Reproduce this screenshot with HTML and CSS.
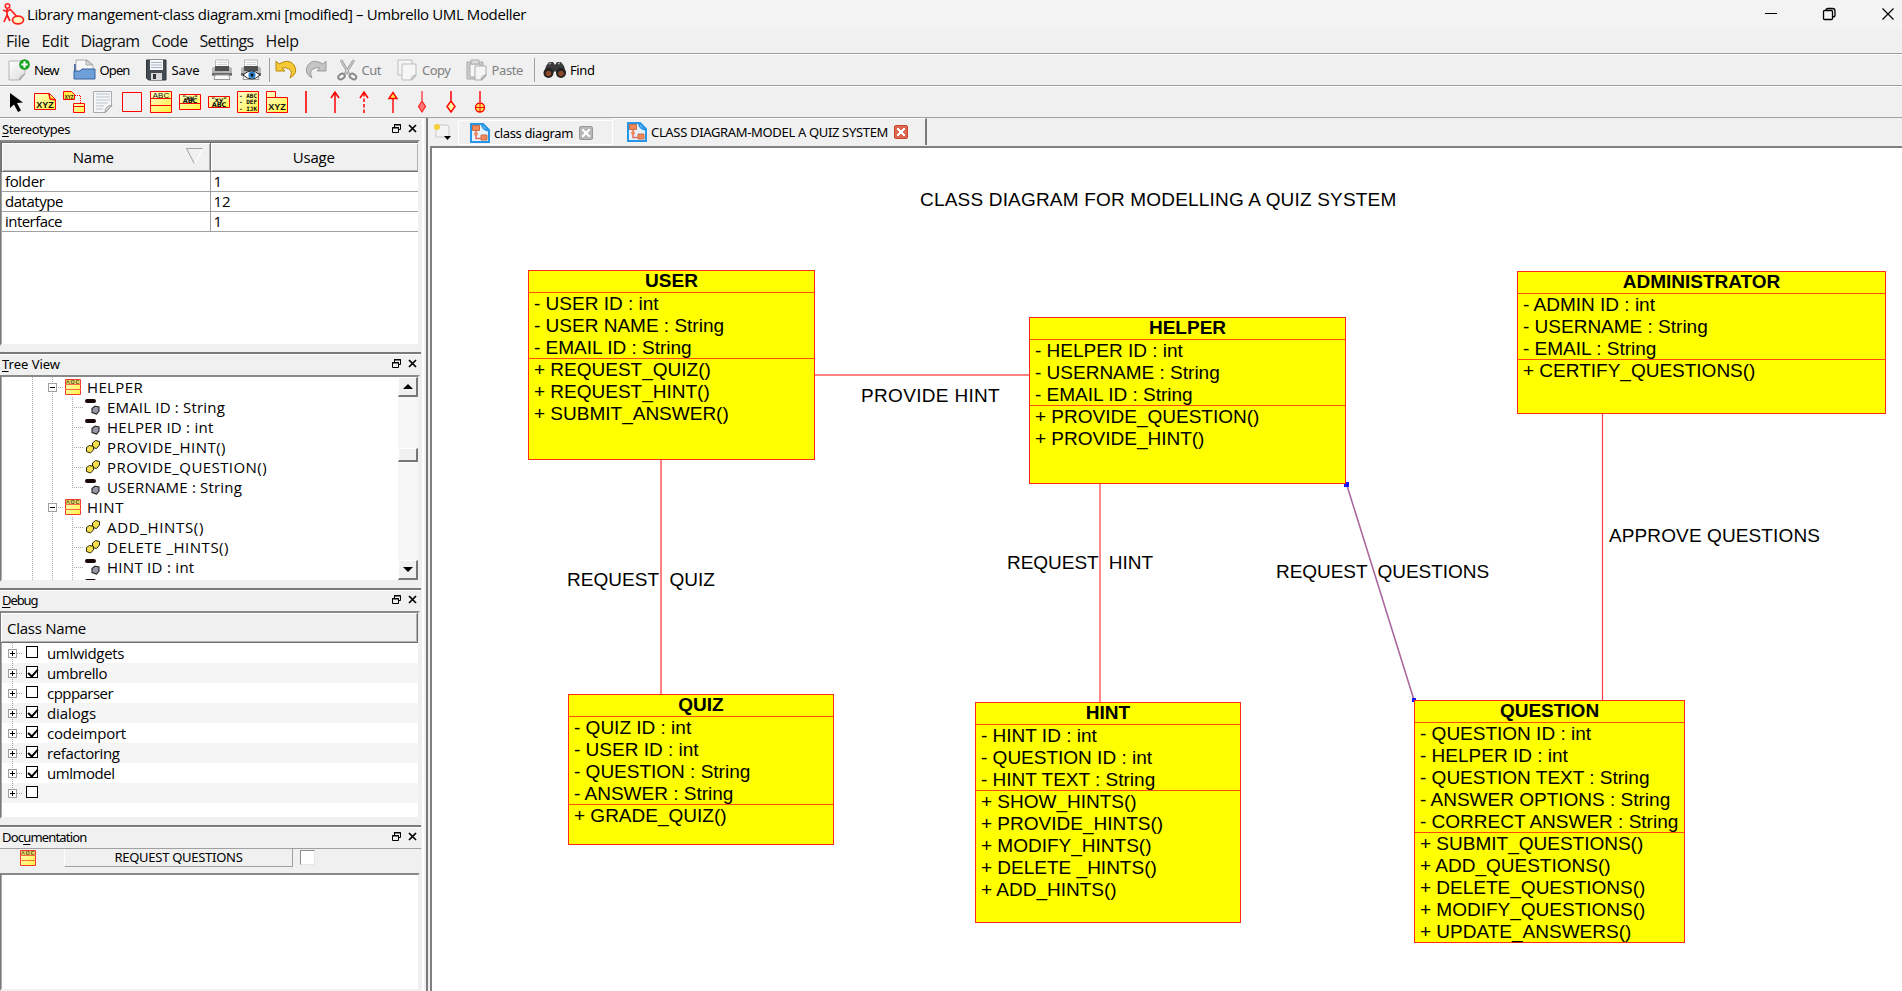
FILE: index.html
```html
<!DOCTYPE html>
<html lang="en">
<head>
<meta charset="utf-8">
<title>Umbrello UML Modeller</title>
<link rel="stylesheet" href="styles.css">
</head>
<body>
<svg width="0" height="0" class="defs">
  <defs>
    <linearGradient id="cream" x1="0" y1="0" x2="1" y2="1"><stop offset="0" stop-color="#ffffd0"/><stop offset="1" stop-color="#fff23c"/></linearGradient>
    <linearGradient id="paper" x1="0" y1="0" x2="1" y2="1"><stop offset="0" stop-color="#fff"/><stop offset="1" stop-color="#dcdcdc"/></linearGradient>
    <symbol id="float" viewBox="0 0 9 9"><path d="M2.5 0.5h6v5h-2M2.5 0v3M2 1h7M.5 3.5h6v5h-6zM0 4h7" fill="none" stroke="#000"/></symbol>
    <symbol id="close" viewBox="0 0 9 9"><path d="M1 1l7 7M8 1L1 8" stroke="#000" stroke-width="1.7"/></symbol>
    <symbol id="class" viewBox="0 0 16 16"><path d="M.5 .5h15v15H.5z" fill="url(#cream)" stroke="#f43a2a"/><path d="M1 1h14v4H1z" fill="#dccf62"/><path d="M1.500 4.500l1.500-3 1.500 3M6.500 1.500v3h2.500v-3zM14 1.500h-2.500v3H14" stroke="#6a6028" stroke-width=".8" fill="none"/><path d="M0 5.500h16M0 10.500h16" stroke="#ff6a40"/></symbol>
    <symbol id="attr" viewBox="0 0 16 16"><path d="M2 2h7" stroke="#1a0508" stroke-width="4" stroke-linecap="round"/><path d="M7 9.500l3-2.500 4 1v4l-2.500 3-4.500-1.500z" fill="#9a96a8" stroke="#222" stroke-width="1.100"/></symbol>
    <symbol id="oper" viewBox="0 0 16 16"><path d="M7.500 4l3-2.500 4 1v3.500l-3 3.500-4-1z" fill="#f3e04c" stroke="#2b2400"/><path d="M1.500 8.500l3-2 4 .8v3.500L5.500 14l-4-1.500z" fill="#f3e04c" stroke="#2b2400"/></symbol>
    <symbol id="diagram" viewBox="0 0 20 20"><path d="M1 1h12l6 6v12H1z" fill="#e4f3ff" stroke="#2796e6" stroke-width="2"/><path d="M12 1q-1 5 7 7z" fill="#fff" stroke="#2796e6" stroke-width="1.500"/><path d="M2.500 2.500h7v5h-7zM11 12h6v5h-6z" fill="#f08a5c" stroke="#c96a40"/><path d="M6 12v3.500h5M6 8v2" fill="none" stroke="#e66a58" stroke-width="1.500"/><circle cx="6" cy="11" r="2" fill="#f08a5c"/></symbol>
    <symbol id="printer" viewBox="0 0 22 22"><path d="M4.500 1h13v9h-13z" fill="#fafafa" stroke="#bbb"/><path d="M6 3.500h10M6 5.500h10" stroke="#d4d4d4"/><path d="M1 10q0-2 2-2h16q2 0 2 2v7H1z" fill="#b4b4b4"/><path d="M4 7h14v5H4z" fill="#505050"/><path d="M1 14h20v2.500H1z" fill="#6a6a6a"/><path d="M4 16h14l1 4.500H3z" fill="#fafafa" stroke="#999"/></symbol>
  </defs>
</svg>
<div class="window">
  <header class="titlebar">
    <svg class="app" width="23" height="22" viewBox="0 0 23 22"><circle cx="5.500" cy="3" r="2.200" fill="#fff" stroke="#f22" stroke-width="1.600"/><path d="M1 7l4 1.500 4-2.500M5 5.500v7M5 12l-3 7M5 12l3 6M9 7l6 7" stroke="#f22" stroke-width="1.800" fill="none"/><ellipse cx="16" cy="17" rx="5.500" ry="3.800" fill="#fff9c0" stroke="#f22" stroke-width="1.700"/></svg>
    <span class="caption" data-w="499">Library mangement-class diagram.xmi [modified] – Umbrello UML Modeller</span>
    <svg class="winbtns" width="130" height="14" viewBox="0 0 130 14" fill="none" stroke="#000"><path d="M0 6.500h12"/><path d="M58.500 4.500q0-1 1-1h7q1 0 1 1v7q0 1-1 1h-7q-1 0-1-1zM61 3.500q0-2 2-2h4.500q2.500 0 2.500 2.500v4q0 2-2 2" stroke-width="1.300"/><path d="M117.500 1.500l11 11M128.500 1.500l-11 11" stroke-width="1.200"/></svg>
  </header>
  <nav class="menubar">
    <span data-w="23.500">File</span><span data-w="27">Edit</span><span data-w="59">Diagram</span><span data-w="36">Code</span><span data-w="54">Settings</span><span data-w="33">Help</span>
  </nav>
  <div class="toolbar main">
    <svg class="t-new" width="22" height="22" viewBox="0 0 22 22"><path d="M1 2h13l3 3v10l-5 6H1z" fill="url(#paper)" stroke="#b5b5b5"/><path d="M11 21q1-5 6-6z" fill="#eee" stroke="#aaa"/><circle cx="16.500" cy="5.500" r="5.300" fill="#14a01c"/><path d="M16.500 2.300v6.400M13.300 5.500h6.400" stroke="#fff" stroke-width="2.200"/></svg>
    <span data-w="24.500" class="l-new">New</span>
    <svg class="t-open" width="23" height="22" viewBox="0 0 23 22"><path d="M1 5h6v14H1z" fill="#3f6ba8"/><path d="M3 1h11l6 5v9H3z" fill="#f8f8f8" stroke="#aaa"/><path d="M13 1v5h6z" fill="#ddd" stroke="#aaa"/><path d="M1 12h6l2-2h13v10H1z" fill="#6f9fd8" stroke="#35609c"/></svg>
    <span data-w="30" class="l-open">Open</span>
    <svg class="t-save" width="21" height="22" viewBox="0 0 21 22"><path d="M.5 1h19.500v20H2.500l-2-2z" fill="#444b53" stroke="#2d3238"/><path d="M4 1h13v10H4z" fill="#f5f7f9"/><path d="M5 3.500h11M5 6h11M5 8.500h11" stroke="#a8b6c4"/><path d="M5 14h11v7H5z" fill="#d5d8db"/><path d="M7 15h3v5H7z" fill="#333"/></svg>
    <span data-w="28" class="l-save">Save</span>
    <svg class="t-print" width="22" height="22"><use href="#printer"/></svg>
    <svg class="t-preview" width="22" height="22"><use href="#printer"/><path d="M3 16q8-8 17 0-8 8-17 0z" fill="#fff" stroke="#222"/><circle cx="12" cy="16" r="3.600" fill="#2d82d0"/><circle cx="12" cy="16" r="1.500" fill="#111"/></svg>
    <i class="sep"></i>
    <svg class="t-undo" width="23" height="20" viewBox="0 0 23 20"><path d="M1 1l3 3q10-6 15 1 5 8-4 13 3-7-1-9-3-2-7-1l3 3H1z" fill="#f5c838" stroke="#b98a10"/></svg>
    <svg class="t-redo" width="23" height="20" viewBox="0 0 23 20"><path d="M22 1l-3 3Q9-2 4 5q-5 8 4 13-3-7 1-9 3-2 7-1l-3 3h9z" fill="#c4c4c4" stroke="#9c9c9c"/></svg>
    <svg class="t-cut" width="21" height="22" viewBox="0 0 21 22"><path d="M4 1l8 14M17 1L8 15" stroke="#999" stroke-width="2.600"/><path d="M4 1l8 14M17 1L8 15" stroke="#ddd"/><ellipse cx="4.500" cy="17.500" rx="3.500" ry="2.500" transform="rotate(-35 4.500 17.500)" fill="none" stroke="#888" stroke-width="2"/><ellipse cx="16" cy="17.500" rx="3.500" ry="2.500" transform="rotate(35 16 17.500)" fill="none" stroke="#888" stroke-width="2"/></svg>
    <span class="off l-cut" data-w="19.500">Cut</span>
    <svg class="t-copy" width="21" height="22" viewBox="0 0 21 22" fill="#f6f6f6" stroke="#bdbdbd"><path d="M1 1h14v15H1z"/><path d="M5 5h14v12l-4 4H5z"/><path d="M14 21q0-5 5-5z" fill="#ddd"/></svg>
    <span class="off l-copy" data-w="28.500">Copy</span>
    <svg class="t-paste" width="22" height="22" viewBox="0 0 22 22" fill="#f6f6f6" stroke="#aaa"><path d="M1 3h16v17H1z" fill="#ccc"/><path d="M4 5h10v13H4z"/><path d="M5 1h8v4H5z" fill="#ddd"/><path d="M9 7h11v10l-4 4H9z"/><path d="M15 21q0-5 5-5z" fill="#ddd"/></svg>
    <span class="off l-paste" data-w="31.500">Paste</span>
    <i class="sep s2"></i>
    <svg class="t-find" width="24" height="18" viewBox="0 0 24 18"><path d="M3 5l3-4h4l2 3 2-3h4l3 4 2 7h-9l-2-2-2 2H1z" fill="#3a3a3a"/><circle cx="5.500" cy="12" r="5" fill="#222"/><circle cx="18" cy="12" r="5" fill="#222"/><circle cx="5.500" cy="12.500" r="2.800" fill="#8c4a2a"/><circle cx="18" cy="12.500" r="2.800" fill="#8c4a2a"/><path d="M6 3l2-1M15 3l2-1" stroke="#999" stroke-width="1.500"/></svg>
    <span data-w="24.500" class="l-find">Find</span>
  </div>
  <div class="toolbar tools">
    <svg width="29" height="24" viewBox="-14 -12 29 24"><path d="M-6-9l0 15 4-3.500 4 7.500 3-1.500-4-7.500 6-.5z" fill="#000"/></svg>
    <svg width="29" height="24" viewBox="-14 -12 29 24"><path d="M-10.500-8.500h15l6 6v10h-21z" fill="url(#cream)" stroke="red"/><path d="M4-8.500l1 5.500 5.500 1" fill="#ffef50" stroke="red" stroke-width="1.400"/><text x="0" y="6" class="ic b">XYZ</text></svg>
    <svg width="29" height="24" viewBox="-14 -12 29 24"><path d="M-10.500-10.500h8l3 3v5h-11z" fill="#ffe94a" stroke="red"/><path d="M-.5 1.500h11v9h-11zM-.5 4.500h11" fill="url(#cream)" stroke="red"/><path d="M1-6.500h5.500V1" fill="none" stroke="red" stroke-dasharray="1 1"/><text x="-5" y="-3.500" class="ic t">XYZ</text></svg>
    <svg width="29" height="24" viewBox="-14 -12 29 24"><path d="M-9.500-10.500h18v14l-6 7h-12z" fill="#f4f6f8" stroke="#aaa"/><path d="M-7-8h14M-7-5h14M-7-2h14M-7 1h12M-7 4h8M-7 7h7" stroke="#bcc4cc" fill="none"/><path d="M2 10.500q0-7 7-7z" fill="#ddd" stroke="#999"/></svg>
    <svg width="29" height="24" viewBox="-14 -12 29 24"><path d="M-9.500-9.500h19v19h-19z" fill="none" stroke="red"/></svg>
    <svg width="29" height="24" viewBox="-14 -12 29 24"><path d="M-10.500-10.500h21v21h-21zM-10.500-3.500h21M-10.500 3.500h21" fill="url(#cream)" stroke="red"/><text x="0" y="-4.200" class="ic a">ABC</text></svg>
    <svg width="29" height="24" viewBox="-14 -12 29 24"><path d="M-10.500-7.500h21v15h-21zM-10.500 1.500h21" fill="url(#cream)" stroke="red"/><text x="0" y="-2.500" class="ic c">"xy"</text><text x="0" y="1" class="ic c">ABC</text></svg>
    <svg width="29" height="24" viewBox="-14 -12 29 24"><path d="M-10.500-5.500h21v11h-21z" fill="url(#cream)" stroke="red"/><text x="0" y="-.3" class="ic c">"xy"</text><text x="0" y="5" class="ic c">ABC</text></svg>
    <svg width="29" height="24" viewBox="-14 -12 29 24"><path d="M-10.500-10.500h21v21h-21z" fill="url(#cream)" stroke="red"/><text x="0" y="-4.500" class="ic e">- ABC</text><text x="0" y="2" class="ic e">- DEF</text><text x="0" y="8.500" class="ic e">- IJK</text></svg>
    <svg width="29" height="24" viewBox="-14 -12 29 24"><path d="M-10.500-10.500h9v6h-9zM-10.500-4.500h21v15h-21z" fill="url(#cream)" stroke="red"/><text x="0" y="8" class="ic d">XYZ</text></svg>
    <svg width="29" height="24" viewBox="-14 -12 29 24" stroke="red"><path d="M0-11v22" stroke-width="1.600"/></svg>
    <svg width="29" height="24" viewBox="-14 -12 29 24" stroke="red" fill="none" stroke-width="1.500"><path d="M0 11V-9M-4-4l4-6 4 6"/></svg>
    <svg width="29" height="24" viewBox="-14 -12 29 24" stroke="red" fill="none" stroke-width="1.500"><path d="M0 11V-9" stroke-dasharray="3.500 2"/><path d="M-4-4l4-6 4 6"/></svg>
    <svg width="29" height="24" viewBox="-14 -12 29 24" stroke="red" fill="#ffe94a" stroke-width="1.400"><path d="M0 11V-4M-4-3.500l4-6 4 6z"/></svg>
    <svg width="29" height="24" viewBox="-14 -12 29 24" stroke="#f22" fill="#f77" stroke-width="1.200"><path d="M0-11V0M0-1l3.500 5.500L0 10l-3.500-5.500z"/></svg>
    <svg width="29" height="24" viewBox="-14 -12 29 24" stroke="red" fill="#ffffb0" stroke-width="1.500"><path d="M0-11V0M0-1l4 5.500L0 10l-4-5.500z"/></svg>
    <svg width="29" height="24" viewBox="-14 -12 29 24" stroke="red" fill="#ffe94a" stroke-width="1.400"><path d="M0-11V0"/><circle cx="0" cy="5.500" r="4.500"/><path d="M0 1v9M-4.500 5.500h9" stroke-width="1"/></svg>
  </div>
  <main class="work">
    <aside class="docks">
      <section class="dock d1">
        <h2><span class="tl" data-w="68"><u>S</u>tereotypes</span><svg width="9" height="9"><use href="#float"/></svg><svg width="9" height="9"><use href="#close"/></svg></h2>
        <div class="frame">
          <table>
            <tr><th class="sorted"><span data-w="41">Name</span><svg width="17" height="17" viewBox="0 0 17 17" fill="none"><path d="M8.500 16L.5.500h16" stroke="#a0a0a0"/><path d="M16.500 1l-8 15" stroke="#fff"/></svg></th><th><span data-w="42">Usage</span></th></tr>
            <tr><td><span data-w="39.500">folder</span></td><td>1</td></tr>
            <tr><td><span data-w="58">datatype</span></td><td>12</td></tr>
            <tr><td><span data-w="57">interface</span></td><td>1</td></tr>
          </table>
        </div>
      </section>
      <section class="dock d2">
        <h2><span class="tl" data-w="58"><u>T</u>ree View</span><svg width="9" height="9"><use href="#float"/></svg><svg width="9" height="9"><use href="#close"/></svg></h2>
        <div class="frame treeframe">
          <div class="tree">
            <div class="row top"><b class="pm"></b><svg width="16" height="16"><use href="#class"/></svg><span data-w="56">HELPER</span></div>
            <div class="row"><svg width="16" height="16"><use href="#attr"/></svg><span data-w="118">EMAIL ID : String</span></div>
            <div class="row"><svg width="16" height="16"><use href="#attr"/></svg><span data-w="106.500">HELPER ID : int</span></div>
            <div class="row"><svg width="16" height="16"><use href="#oper"/></svg><span data-w="119">PROVIDE_HINT()</span></div>
            <div class="row"><svg width="16" height="16"><use href="#oper"/></svg><span data-w="160">PROVIDE_QUESTION()</span></div>
            <div class="row last"><svg width="16" height="16"><use href="#attr"/></svg><span data-w="135">USERNAME : String</span></div>
            <div class="row top"><b class="pm"></b><svg width="16" height="16"><use href="#class"/></svg><span data-w="37">HINT</span></div>
            <div class="row"><svg width="16" height="16"><use href="#oper"/></svg><span data-w="97">ADD_HINTS()</span></div>
            <div class="row"><svg width="16" height="16"><use href="#oper"/></svg><span data-w="122">DELETE _HINTS()</span></div>
            <div class="row"><svg width="16" height="16"><use href="#attr"/></svg><span data-w="87.500">HINT ID : int</span></div>
            <div class="row"><svg width="16" height="16"><use href="#attr"/></svg></div>
          </div>
          <div class="scroll"><div class="sb"><i class="up"></i></div><div class="thumb"></div><div class="sb"><i class="down"></i></div></div>
        </div>
      </section>
      <section class="dock d3">
        <h2><span class="tl" data-w="35.500"><u>D</u>ebug</span><svg width="9" height="9"><use href="#float"/></svg><svg width="9" height="9"><use href="#close"/></svg></h2>
        <div class="frame">
          <div class="head"><span data-w="79">Class Name</span></div>
          <ul class="checks">
            <li><b class="pm plus"></b><i class="cb"></i><span data-w="77">umlwidgets</span></li>
            <li><b class="pm plus"></b><i class="cb on"></i><span data-w="60">umbrello</span></li>
            <li><b class="pm plus"></b><i class="cb"></i><span data-w="66">cppparser</span></li>
            <li><b class="pm plus"></b><i class="cb on"></i><span data-w="49">dialogs</span></li>
            <li><b class="pm plus"></b><i class="cb on"></i><span data-w="79">codeimport</span></li>
            <li><b class="pm plus"></b><i class="cb on"></i><span data-w="72.500">refactoring</span></li>
            <li><b class="pm plus"></b><i class="cb on"></i><span data-w="67.500">umlmodel</span></li>
            <li><b class="pm plus"></b><i class="cb"></i></li>
          </ul>
        </div>
      </section>
      <section class="dock d4">
        <h2><span class="tl" data-w="84.500">Doc<u>u</u>mentation</span><svg width="9" height="9"><use href="#float"/></svg><svg width="9" height="9"><use href="#close"/></svg></h2>
        <div class="docrow"><svg width="16" height="16"><use href="#class"/></svg><div class="docbtn"><span class="tl" data-w="128">REQUEST QUESTIONS</span></div><i class="box"></i></div>
        <div class="frame"></div>
      </section>
    </aside>
    <section class="editor">
      <div class="tabs">
        <svg class="newtab" width="19" height="18" viewBox="0 0 19 18"><path d="M3 2h10q3 0 3 3v9H3z" fill="#f4f4f4" stroke="#c9c9c9"/><circle cx="4" cy="4" r="3" fill="#f6cf3a"/><path d="M11 13h7l-3.500 4z" fill="#000"/></svg>
        <div class="tab one"><svg width="20" height="20"><use href="#diagram"/></svg><span class="tl" data-w="79">class diagram</span><i class="x"></i></div>
        <div class="tab two"><svg width="20" height="20"><use href="#diagram"/></svg><span class="tl" data-w="237">CLASS DIAGRAM-MODEL A QUIZ SYSTEM</span><i class="x red"></i></div>
      </div>
      <div class="canvas">
        <svg class="links" width="1470" height="843" viewBox="432 148 1470 843" fill="none" stroke="#ff8080" stroke-width="2"><path d="M815 375h215M661 460v234"/><path d="M1100 484v218" stroke="#ff4c4c" stroke-width="1.300"/><path d="M1602.500 414v286" stroke="#ff3c3c" stroke-width="1.200"/><path d="M1346.500 484L1414 700" stroke="#a8649c" stroke-width="1.500"/><path d="M1344 482h5v5h-5zM1412 698h4v4h-4z" fill="#11f" stroke="none"/></svg>
        <p class="lab g1" data-w="476.500">CLASS DIAGRAM FOR MODELLING A QUIZ SYSTEM</p>
        <p class="lab g2" data-w="139">PROVIDE HINT</p>
        <p class="lab g3" data-w="148">REQUEST  QUIZ</p>
        <p class="lab g4" data-w="146">REQUEST  HINT</p>
        <p class="lab g5" data-w="213">REQUEST  QUESTIONS</p>
        <p class="lab g6" data-w="211">APPROVE QUESTIONS</p>
        <article class="node user"><h3>USER</h3><div>- USER ID : int<br>- USER NAME : String<br>- EMAIL ID : String</div><div>+ REQUEST_QUIZ()<br>+ REQUEST_HINT()<br>+ SUBMIT_ANSWER()</div></article>
        <article class="node helper"><h3>HELPER</h3><div>- HELPER ID : int<br>- USERNAME : String<br>- EMAIL ID : String</div><div>+ PROVIDE_QUESTION()<br>+ PROVIDE_HINT()</div></article>
        <article class="node admin"><h3>ADMINISTRATOR</h3><div>- ADMIN ID : int<br>- USERNAME : String<br>- EMAIL : String</div><div>+ CERTIFY_QUESTIONS()</div></article>
        <article class="node quiz"><h3>QUIZ</h3><div>- QUIZ ID : int<br>- USER ID : int<br>- QUESTION : String<br>- ANSWER : String</div><div>+ GRADE_QUIZ()</div></article>
        <article class="node hint"><h3>HINT</h3><div>- HINT ID : int<br>- QUESTION ID : int<br>- HINT TEXT : String</div><div>+ SHOW_HINTS()<br>+ PROVIDE_HINTS()<br>+ MODIFY_HINTS()<br>+ DELETE _HINTS()<br>+ ADD_HINTS()</div></article>
        <article class="node question"><h3>QUESTION</h3><div>- QUESTION ID : int<br>- HELPER ID : int<br>- QUESTION TEXT : String<br>- ANSWER OPTIONS : String<br>- CORRECT ANSWER : String</div><div>+ SUBMIT_QUESTIONS()<br>+ ADD_QUESTIONS()<br>+ DELETE_QUESTIONS()<br>+ MODIFY_QUESTIONS()<br>+ UPDATE_ANSWERS()</div></article>
      </div>
    </section>
  </main>
</div>
<script src="fit.js"></script>
</body>
</html>
```
FILE: fit.js
```js
// Tracks each label to its design width.
for (const el of document.querySelectorAll('[data-w]')) {
  const natural = el.getBoundingClientRect().width;
  const gaps = el.textContent.length;
  el.style.letterSpacing = (el.dataset.w - natural) / gaps + 'px';
}
```
FILE: styles.css
```css
* { box-sizing: border-box; }
body { margin: 0; background: #f0f0f0; color: #000; font-family: "Open Sans", sans-serif; font-size: 15px; overflow: hidden; }
.defs { position: absolute; }
.window { width: 1902px; height: 991px; display: flex; flex-direction: column; }
svg { flex: none; display: block; }
span, p { white-space: pre; }
span { display: inline-block; flex: none; }

.titlebar { height: 28px; background: #f3f3f3; display: flex; align-items: center; padding: 0 7px 0 2px; }
.caption { margin-left: 2px; line-height: 28px; font-size: 15px; }
.winbtns { margin-left: auto; }

.menubar { height: 26px; border-bottom: 1px solid #a0a0a0; display: flex; align-items: center; padding: 2px 0 0 6px; line-height: 25px; color: #111; font-size: 16px; }
.menubar span { margin-right: 12px; }

.toolbar { display: flex; align-items: center; border-top: 1px solid #fff; border-bottom: 1px solid #a0a0a0; height: 32px; }
.main { font-family: "Noto Sans", sans-serif; font-size: 13px; padding-left: 8px; }
.main span { margin-left: 4px; line-height: 30px; }
.off { color: #808080; }
.t-open { margin-left: 14px; }
.t-save { margin-left: 16px; }
.main .l-save { margin-left: 5px; }
.t-print { margin-left: 11px; }
.t-preview { margin-left: 7px; }
.sep { width: 1px; height: 24px; background: #a0a0a0; margin: 0 5px 0 7px; }
.t-redo { margin-left: 6px; }
.t-cut { margin-left: 10px; }
.t-copy { margin-left: 16px; }
.t-paste { margin-left: 15px; }
.s2 { margin: 0 8px 0 11px; }
.main .l-find { margin-left: 3px; }
.tools { padding-left: 2px; }
.ic { text-anchor: middle; font-family: "Liberation Sans", sans-serif; font-weight: bold; fill: #111; stroke: none; }
.b { font-size: 9px; }
.t { font-size: 4.500px; }
.a { font-size: 8px; font-weight: normal; }
.c { font-size: 6.500px; font-family: "DejaVu Sans", sans-serif; }
.e { font-size: 6px; font-family: "DejaVu Sans Mono", monospace; }
.d { font-size: 9px; }

.work { flex: 1; display: flex; min-height: 0; }
.docks { width: 428px; padding-right: 5px; border-right: 2px solid #7a7a7a; display: flex; flex-direction: column; background: linear-gradient(90deg, #f0f0f0 422px, #fff 422px, #fff 424px, #f0f0f0 424px); }
.dock { display: flex; flex-direction: column; width: 421px; border-top: 1px solid #fff; }
.d1 { height: 233px; }
.d2, .d3, .d4 { border-top: 2px solid #7a7a7a; box-shadow: inset 0 1px #fff; }
.d2 { height: 236px; margin-top: 1px; }
.d3 { height: 237px; }
.d4 { flex: 1; }
.dock h2 { margin: 0; height: 21px; padding: 0 4px 1px 2px; display: flex; align-items: center; gap: 7px; font: 13px/19px "Noto Sans", sans-serif; }
.dock h2 .tl { margin-right: auto; }
.dock h2 svg { margin-top: -2px; }
.dock u { text-underline-offset: 2px; }
.frame { flex: 1; background: #fff; border: 2px solid #7a7a7a; border-left-width: 1px; box-shadow: inset 1px 0 #aaa; border-top-color: #8a8a8a; border-right-color: #f0f0f0; border-bottom-color: #f0f0f0; margin-right: 1px; min-height: 0; overflow: hidden; }
.d1 .frame { margin-bottom: 5px; }
.d2 .frame { margin-bottom: 6px; }
.d3 .frame { margin-bottom: 6px; }

table { border-collapse: collapse; width: 418px; table-layout: fixed; line-height: 19px; }
td, th { border: 1px solid #a0a0a0; padding: 0 4px 0 3px; height: 20px; font-weight: normal; text-align: left; }
th { height: 29px; text-align: center; background: #f0f0f0; border-color: #707070; position: relative; box-shadow: inset 1px 1px #fff, inset -1px -1px #b0b0b0; }
th.sorted { padding-right: 28px; }
th svg { position: absolute; right: 7px; top: 5px; }

.treeframe { display: flex; }
.tree { flex: 1; background: repeating-linear-gradient(#aaa 0 1px, transparent 1px 2px) 31px 0 / 1px 100% no-repeat, repeating-linear-gradient(#aaa 0 1px, transparent 1px 2px) 51px 0 / 1px 100% no-repeat; }
.row { height: 20px; display: flex; align-items: center; line-height: 20px; padding-left: 84px; background: repeating-linear-gradient(#aaa 0 1px, transparent 1px 2px) 71px 0 / 1px 100% no-repeat, repeating-linear-gradient(90deg, #aaa 0 1px, transparent 1px 2px) 71px 10px / 11px 1px no-repeat; }
.row.last { background-size: 1px 10px, 11px 1px; }
.row.top { background: repeating-linear-gradient(90deg, #aaa 0 1px, transparent 1px 2px) 57px 10px / 6px 1px no-repeat; padding-left: 47px; }
.row span { margin-left: 6px; }
.row.top svg { margin-left: 8px; }
.row.top span { margin-left: 6px; }
.pm { width: 9px; height: 9px; border: 1px solid #a0a0a0; background: linear-gradient(#000, #000) center / 5px 1px no-repeat #fff; }
.pm.plus { background: linear-gradient(#000, #000) center / 5px 1px no-repeat, linear-gradient(#000, #000) center / 1px 5px no-repeat #fff; }
.scroll { width: 20px; background: #f7f7f7; display: flex; flex-direction: column; }
.sb, .thumb { height: 20px; background: #f0f0f0; border: 1px solid #fff; border-right: 2px solid #777; border-bottom: 2px solid #777; display: flex; align-items: center; justify-content: center; }
.thumb { height: 14px; margin: 51px 0 auto; }
.up, .down { border: 5px solid transparent; border-width: 0 5px 5px; border-bottom-color: #000; }
.down { transform: rotate(180deg); }

.head { height: 30px; border: 1px solid #707070; border-left: 0; border-top: 0; background: #f0f0f0; box-shadow: inset 1px 1px #fff, inset -1px -1px #b0b0b0; line-height: 30px; padding-left: 6px; }
.checks { list-style: none; margin: 0; padding: 0; background: repeating-linear-gradient(#aaa 0 1px, transparent 1px 2px) 11px 0 / 1px 150px no-repeat; }
.checks li { height: 20px; display: flex; align-items: center; padding-left: 7px; line-height: 20px; background: repeating-linear-gradient(90deg, #aaa 0 1px, transparent 1px 2px) 16px 10px / 5px 1px no-repeat; }
.checks li:nth-child(even) { background-color: rgba(0, 0, 0, .04); }
.cb { width: 12px; height: 12px; border: 1px solid #000; margin: -3px 9px 0; background: #fff; display: block; }
.cb.on::after { content: ""; display: block; width: 8px; height: 4px; border: 2px solid #000; border-top: 0; border-right: 0; transform: translate(1px, 2px) rotate(-48deg); }

.docrow { height: 25px; border-top: 1px solid #a0a0a0; display: flex; align-items: flex-start; padding-left: 20px; }
.docrow svg { margin-top: 1px; }
.docbtn { margin-left: 28px; width: 229px; height: 18px; border: 1px solid #a0a0a0; border-top: 0; border-left-color: #fff; text-align: center; font: 13px/17px "Noto Sans", sans-serif; }
.box { width: 15px; height: 15px; margin: 1px 0 0 7px; background: #fff; border: 1px solid #8a8a8a; border-right-color: #e6e6e6; border-bottom-color: #e6e6e6; }

.editor { flex: 1; padding-left: 2px; display: flex; flex-direction: column; }
.tabs { height: 28px; display: flex; padding-left: 3px; align-items: flex-start; font: 13px/22px "Noto Sans", sans-serif; }
.newtab { margin-top: 5px; }
.tab { display: flex; align-items: center; height: 25px; border-top: 1px solid #fff; border-left: 1px solid #fff; border-bottom: 1px solid #fff; border-radius: 3px 0 0 0; }
.tab .tl { margin-left: 4px; }
.one { margin: 2px 0 0 6px; width: 154px; padding-left: 11px; }
.two { width: 315px; height: 27px; padding-left: 14px; border-right: 2px solid #7a7a7a; border-bottom: 0; }
.x { width: 14px; height: 14px; margin-left: 6px; border-radius: 2px; background: linear-gradient(45deg, transparent 42%, #fff 42% 58%, transparent 58%) center / 8px 8px no-repeat, linear-gradient(-45deg, transparent 42%, #fff 42% 58%, transparent 58%) center / 8px 8px no-repeat #b8b8b8; border: 1px solid #989898; }
.x.red { background-color: #dd6a50; border-color: #c9452c; }
.canvas { flex: 1; position: relative; overflow: hidden; background: #fff; border-top: 2px solid #808080; border-left: 2px solid #808080; }
.links { position: absolute; left: 0; top: 0; }
.lab, .node { position: absolute; margin: 0; font: 19px/22px "Liberation Sans", Arial, sans-serif; }
.node { background: #ff0; border: 1px solid #ff2a1a; }
.node h3 { margin: 0; height: 22px; font-size: 19px; line-height: 20px; text-align: center; border-bottom: 1px solid #ff4a10; }
.node div { padding-left: 5px; white-space: pre; }
.node h3 + div { box-shadow: inset 0 -1px #ff4a10; }
.g1 { left: 488px; top: 41px; }
.g2 { left: 429px; top: 237px; }
.g3 { left: 135px; top: 421px; }
.g4 { left: 575px; top: 404px; }
.g5 { left: 844px; top: 413px; }
.g6 { left: 1177px; top: 377px; }
.user { left: 96px; top: 122px; width: 287px; height: 190px; }
.helper { left: 597px; top: 169px; width: 317px; height: 167px; }
.admin { left: 1085px; top: 123px; width: 369px; height: 143px; }
.quiz { left: 136px; top: 546px; width: 266px; height: 151px; }
.hint { left: 543px; top: 554px; width: 266px; height: 221px; }
.question { left: 982px; top: 552px; width: 271px; height: 243px; }
```
